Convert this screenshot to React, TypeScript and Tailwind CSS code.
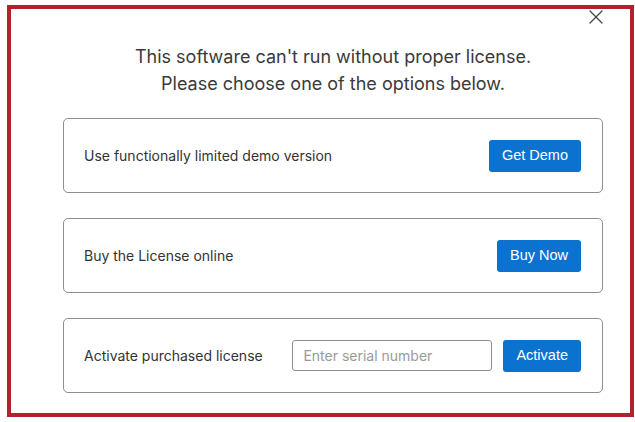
import { X } from 'lucide-react'

const OPTIONS = [
  { id: 'demo', label: 'Use functionally limited demo version', action: 'Get Demo' },
  { id: 'buy', label: 'Buy the License online', action: 'Buy Now' },
]

function ActionButton({ children }: { children: string }) {
  return (
    <button
      type="button"
      className="h-[32px] rounded-[3px] bg-[#0b72d0] px-[13px] font-['Liberation_Sans',Arial,sans-serif] text-[14.5px] font-medium text-white"
    >
      {children}
    </button>
  )
}

export default function App() {
  return (
    <div className="h-[422px] w-[635px] bg-white pl-[7px] pt-[5px] font-['Inter',sans-serif] text-[#333]">
      <div className="relative h-[412px] w-[627px] border-4 border-[#b1222a] pl-[52px] pr-[27px] pt-[34px]">
        <button
          type="button"
          aria-label="Close"
          className="absolute right-[22px] top-[-4px] text-[#444]"
        >
          <X className="size-[24px]" strokeWidth={1.25} />
        </button>

        <div className="text-center text-[18px] leading-[27px] text-[#3a3a3a]">
          <p>This software can't run without proper license.</p>
          <p>Please choose one of the options below.</p>
        </div>

        <div className="mt-[21px] flex flex-col gap-[25px]">
          {OPTIONS.map((opt) => (
            <div
              key={opt.id}
              className="flex h-[75px] items-center justify-between rounded-[5px] border border-[#8e8e8e] pl-[20px] pr-[21px]"
            >
              <span className="text-[14px]">{opt.label}</span>
              <ActionButton>{opt.action}</ActionButton>
            </div>
          ))}

          <div className="flex h-[75px] items-center rounded-[5px] border border-[#8e8e8e] pl-[20px] pr-[21px]">
            <span className="text-[14px]">Activate purchased license</span>
            <div className="ml-auto flex items-center gap-[11px]">
              <input
                type="text"
                placeholder="Enter serial number"
                className="h-[31px] w-[200px] rounded-[3px] border border-[#8e8e8e] px-[10px] text-[14px] outline-none placeholder:text-[#9a9a9a]"
              />
              <ActionButton>Activate</ActionButton>
            </div>
          </div>
        </div>
      </div>
    </div>
  )
}
